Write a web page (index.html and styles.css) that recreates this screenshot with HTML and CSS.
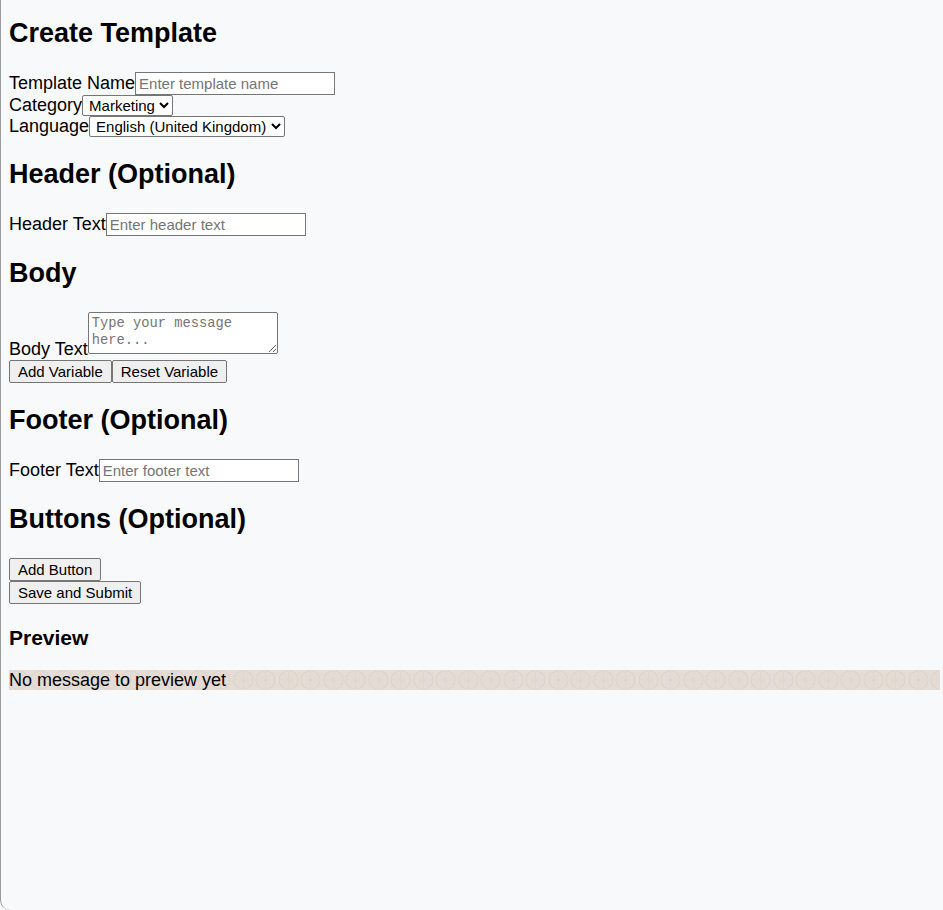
FILE: index.html
```html
<!DOCTYPE html>
<html>
<head>
<meta charset="utf-8">
<title>Create Template</title>
<link rel="stylesheet" href="styles.css">
</head>
<body>
<div class="frame">
  <h2 class="first">Create Template</h2>
  <div class="row"><label>Template Name</label><input class="text" type="text" placeholder="Enter template name"></div>
  <div class="row"><label>Category</label><select class="sel-cat"><option>Marketing</option></select></div>
  <div class="row"><label>Language</label><select class="sel-lang"><option>English (United Kingdom)</option></select></div>

  <h2>Header (Optional)</h2>
  <div class="row"><label>Header Text</label><input class="text" type="text" placeholder="Enter header text"></div>

  <h2>Body</h2>
  <div class="row"><label>Body Text</label><textarea placeholder="Type your message here..."></textarea></div>
  <div class="row"><button>Add Variable</button><button>Reset Variable</button></div>

  <h2>Footer (Optional)</h2>
  <div class="row"><label>Footer Text</label><input class="text" type="text" placeholder="Enter footer text"></div>

  <h2>Buttons (Optional)</h2>
  <div class="row"><button>Add Button</button></div>
  <div class="row"><button>Save and Submit</button></div>

  <h3>Preview</h3>
  <div class="preview">No message to preview yet</div>
</div>
</body>
</html>
```
FILE: styles.css
```css
html, body {
  margin: 0;
  padding: 0;
  height: 100%;
  background: #f8f9fb;
}
body {
  font-family: "Liberation Sans", Arial, sans-serif;
  font-size: 18px;
  color: #000;
}
.frame {
  box-sizing: border-box;
  height: 100%;
  border-left: 1px solid #9a9a9a;
  border-bottom-left-radius: 10px;
  padding: 1px 3px 8px 8px;
}
.frame h2 {
  font-size: 27px;
  line-height: 31px;
  margin: 22px 0 23px;
}
.frame h2.first {
  margin-top: 17px;
}
.frame h3 {
  font-size: 21px;
  line-height: 24px;
  margin: 22px 0 20px;
}
input, select, button {
  font-family: "Liberation Sans", Arial, sans-serif;
  font-size: 15px;
  color: #000;
}
input.text {
  box-sizing: border-box;
  width: 200px;
  height: 23px;
  padding: 1px 3px;
  border: 1px solid #767676;
  background: #fff;
}
input::placeholder, textarea::placeholder {
  color: #757575;
}
select {
  box-sizing: border-box;
  height: 21px;
  border: 1px solid #767676;
  border-radius: 2px;
  background: #fff;
  padding: 0 0 0 2px;
}
.sel-cat { width: 91px; }
.sel-lang { width: 196px; }
textarea {
  box-sizing: border-box;
  width: 190px;
  height: 42px;
  font-family: "Liberation Mono", "DejaVu Sans Mono", monospace;
  font-size: 13.75px;
  line-height: 17px;
  padding: 2px 3px;
  border: 1px solid #767676;
  border-radius: 2px;
  background: #fff;
  margin: 0 0 1px;
}
button {
  height: 23px;
  padding: 1px 8px;
  border: 1px solid #767676;
  border-radius: 2px;
  background: #efefef;
  margin: 0;
}
.preview {
  line-height: 20px;
  background-color: #e5ddd5;
  background-image: url("data:image/svg+xml,%3Csvg xmlns='http://www.w3.org/2000/svg' width='22.5' height='22' viewBox='0 0 22.5 22'%3E%3Ccircle cx='11.25' cy='11' r='9.3' fill='none' stroke='%23dcd3ca' stroke-width='1'/%3E%3Cpath d='M11.25 3v16M3.25 11h16M5.6 5.4l11.3 11.2M16.9 5.4L5.6 16.6' fill='none' stroke='%23ddd4cb' stroke-width='0.6'/%3E%3C/svg%3E");
  background-position: -2px -1px;
}
```
